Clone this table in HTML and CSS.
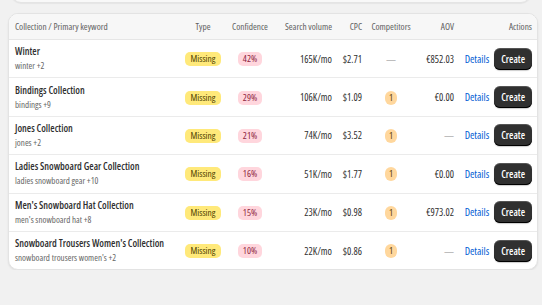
FILE: index.html
```html
<!DOCTYPE html>
<html>
<head>
<meta charset="utf-8">
<link rel="stylesheet" href="styles.css">
</head>
<body>
<div class="prev-card"></div>
<div class="card">
  <div class="row head">
    <div class="c-name">Collection / Primary keyword</div>
    <div class="c-center">Type</div>
    <div class="c-center">Confidence</div>
    <div class="c-right">Search volume</div>
    <div class="c-right">CPC</div>
    <div class="c-center">Competitors</div>
    <div class="c-right">AOV</div>
    <div class="c-right">Actions</div>
  </div>

  <div class="row">
    <div class="c-name"><div class="title">Winter</div><div class="sub">winter +2</div></div>
    <div class="c-center"><span class="pill missing">Missing</span></div>
    <div class="c-center"><span class="pill conf">42%</span></div>
    <div class="c-right">165K/mo</div>
    <div class="c-right">$2.71</div>
    <div class="c-center muted">—</div>
    <div class="c-right">€852.03</div>
    <div class="c-right actions"><a class="link">Details</a><button class="btn">Create</button></div>
  </div>

  <div class="row">
    <div class="c-name"><div class="title">Bindings Collection</div><div class="sub">bindings +9</div></div>
    <div class="c-center"><span class="pill missing">Missing</span></div>
    <div class="c-center"><span class="pill conf">29%</span></div>
    <div class="c-right">106K/mo</div>
    <div class="c-right">$1.09</div>
    <div class="c-center"><span class="pill comp">1</span></div>
    <div class="c-right">€0.00</div>
    <div class="c-right actions"><a class="link">Details</a><button class="btn">Create</button></div>
  </div>

  <div class="row">
    <div class="c-name"><div class="title">Jones Collection</div><div class="sub">jones +2</div></div>
    <div class="c-center"><span class="pill missing">Missing</span></div>
    <div class="c-center"><span class="pill conf">21%</span></div>
    <div class="c-right">74K/mo</div>
    <div class="c-right">$3.52</div>
    <div class="c-center"><span class="pill comp">1</span></div>
    <div class="c-right muted">—</div>
    <div class="c-right actions"><a class="link">Details</a><button class="btn">Create</button></div>
  </div>

  <div class="row">
    <div class="c-name"><div class="title">Ladies Snowboard Gear Collection</div><div class="sub">ladies snowboard gear +10</div></div>
    <div class="c-center"><span class="pill missing">Missing</span></div>
    <div class="c-center"><span class="pill conf">16%</span></div>
    <div class="c-right">51K/mo</div>
    <div class="c-right">$1.77</div>
    <div class="c-center"><span class="pill comp">1</span></div>
    <div class="c-right">€0.00</div>
    <div class="c-right actions"><a class="link">Details</a><button class="btn">Create</button></div>
  </div>

  <div class="row">
    <div class="c-name"><div class="title">Men's Snowboard Hat Collection</div><div class="sub">men's snowboard hat +8</div></div>
    <div class="c-center"><span class="pill missing">Missing</span></div>
    <div class="c-center"><span class="pill conf">15%</span></div>
    <div class="c-right">23K/mo</div>
    <div class="c-right">$0.98</div>
    <div class="c-center"><span class="pill comp">1</span></div>
    <div class="c-right">€973.02</div>
    <div class="c-right actions"><a class="link">Details</a><button class="btn">Create</button></div>
  </div>

  <div class="row last">
    <div class="c-name"><div class="title">Snowboard Trousers Women's Collection</div><div class="sub">snowboard trousers women's +2</div></div>
    <div class="c-center"><span class="pill missing">Missing</span></div>
    <div class="c-center"><span class="pill conf">10%</span></div>
    <div class="c-right">22K/mo</div>
    <div class="c-right">$0.86</div>
    <div class="c-center"><span class="pill comp">1</span></div>
    <div class="c-right muted">—</div>
    <div class="c-right actions"><a class="link">Details</a><button class="btn">Create</button></div>
  </div>
</div>
</body>
</html>
```
FILE: styles.css
```css
html, body {
  margin: 0;
  background: #f1f1f1;
}
body {
  padding: 0 4px 0 8px;
  font-family: "Open Sans", "Roboto", sans-serif;
  font-stretch: 75%;
  color: #303030;
  font-size: 10px;
}
.prev-card {
  margin: -20px 7px 0 3px;
  height: 21px;
  background: #f8f8f8;
  border: 1px solid #e4e4e4;
  border-radius: 10px;
  box-shadow: 0 1px 1px rgba(0,0,0,0.05);
}
.card {
  margin-top: 10px;
  width: 528px;
  background: #fff;
  border: 1px solid #e3e3e3;
  border-radius: 10px;
  box-shadow: 0 1px 2px rgba(0,0,0,0.08);
  overflow: hidden;
}
.row {
  display: grid;
  grid-template-columns: 162px 52px 42px 61px 30px 58px 34px 78px;
  align-items: center;
  padding: 0 7px 0 6px;
  height: 37.4px;
  border-bottom: 1px solid #ebebeb;
}
.row.last { border-bottom: none; }
.row.head {
  height: 25px;
  background: #f7f7f7;
  color: #616161;
  font-size: 9.3px;
  border-bottom: 1px solid #e6e6e6;
}
.c-center { text-align: center; white-space: nowrap; }
.c-right { text-align: right; white-space: nowrap; }
.c-name { white-space: nowrap; }
.title {
  font-size: 10px;
  font-weight: 600;
  line-height: 13px;
  color: #303030;
}
.sub {
  font-size: 9px;
  line-height: 13px;
  margin-top: 1px;
  color: #666666;
}
.muted { color: #8a8a8a; }
.pill {
  display: inline-block;
  height: 14px;
  line-height: 14px;
  border-radius: 5px;
  font-size: 9.5px;
  font-weight: 500;
  padding: 0 5px;
}
.missing { background: #ffe97a; color: #4f4200; }
.conf { background: #ffd6dd; color: #8e1f3e; }
.comp { background: #ffd79d; color: #5e4200; padding: 0 4px; border-radius: 6px; }
.actions {
  display: flex;
  justify-content: flex-end;
  align-items: center;
  gap: 5px;
}
.link {
  color: #005bd3;
  font-size: 10.5px;
}
.btn {
  font-family: inherit;
  font-stretch: 75%;
  height: 22px;
  padding: 0 7px;
  border: none;
  border-radius: 6px;
  background: #303030;
  color: #fff;
  font-size: 10px;
  font-weight: 600;
  box-shadow: inset 0 -1px 0 #000, inset 0 1px 0 rgba(255,255,255,0.18), 0 1px 1px rgba(0,0,0,0.2);
}
```
